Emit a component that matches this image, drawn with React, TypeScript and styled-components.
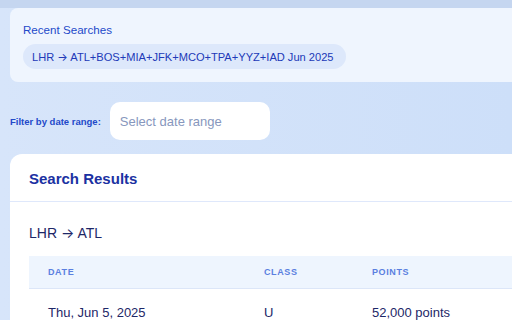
import React from "react";
import styled, { createGlobalStyle } from "styled-components";

const GlobalStyle = createGlobalStyle`
  html, body {
    margin: 0;
    padding: 0;
    overflow: hidden;
  }
  body {
    font-family: "Liberation Sans", Arial, sans-serif;
    background: linear-gradient(90deg, #d7e5fa 0%, #cddff9 100%);
  }
`;

interface ResultRow {
  date: string;
  cabin: string;
  points: string;
}

const rows: ResultRow[] = [
  { date: "Thu, Jun 5, 2025", cabin: "U", points: "52,000 points" },
];

const App: React.FC = () => {
  return (
    <>
      <GlobalStyle />
      <Page>
        <TopBand />
        <Content>
          <RecentCard>
            <RecentTitle>Recent Searches</RecentTitle>
            <ChipRow>
              <Chip>
                LHR <Arrow>→</Arrow> ATL+BOS+MIA+JFK+MCO+TPA+YYZ+IAD Jun 2025
              </Chip>
            </ChipRow>
          </RecentCard>

          <FilterRow>
            <FilterLabel>Filter by date range:</FilterLabel>
            <DateInput placeholder="Select date range" readOnly />
          </FilterRow>

          <ResultsCard>
            <ResultsHeader>Search Results</ResultsHeader>
            <ResultsBody>
              <RouteTitle>
                LHR <Arrow>→</Arrow> ATL
              </RouteTitle>
              <Table>
                <HeadRow>
                  <HeadCell>Date</HeadCell>
                  <HeadCell>Class</HeadCell>
                  <HeadCell>Points</HeadCell>
                </HeadRow>
                {rows.map((row, i) => (
                  <BodyRow key={i}>
                    <Cell>{row.date}</Cell>
                    <Cell>{row.cabin}</Cell>
                    <Cell>{row.points}</Cell>
                  </BodyRow>
                ))}
              </Table>
            </ResultsBody>
          </ResultsCard>
        </Content>
      </Page>
    </>
  );
};

export default App;

const Page = styled.div`
  width: 640px;
  height: 320px;
  overflow: hidden;
  background: linear-gradient(#c5d6f0 0, #c5d6f0 8px, transparent 8px);
`;

const TopBand = styled.div`
  height: 8px;
`;

const Content = styled.div`
  padding: 0 0 0 10px;
  display: flex;
  flex-direction: column;
`;

const Arrow = styled.span`
  font-family: "Inter", "DejaVu Sans", sans-serif;
`;

const RecentCard = styled.div`
  background: #eff5fe;
  border-radius: 8px;
  padding: 14px 13px 13px;
  display: flex;
  flex-direction: column;
  gap: 6px;
`;

const RecentTitle = styled.div`
  font-size: 11.6px;
  line-height: 16px;
  color: #2349c9;
`;

const ChipRow = styled.div`
  display: flex;
`;

const Chip = styled.div`
  background: #dde8fb;
  border-radius: 13px;
  padding: 0 12px 0 9px;
  height: 25px;
  display: flex;
  align-items: center;
  font-size: 11.1px;
  color: #2139b8;
  white-space: pre;
`;

const FilterRow = styled.div`
  display: flex;
  align-items: center;
  gap: 9px;
  margin-top: 20px;
`;

const FilterLabel = styled.label`
  font-size: 9.5px;
  font-weight: 700;
  color: #2349c9;
`;

const DateInput = styled.input`
  width: 160px;
  height: 38px;
  box-sizing: border-box;
  border: none;
  outline: none;
  border-radius: 10px;
  background: #ffffff;
  padding: 0 10px;
  font-family: "Liberation Sans", Arial, sans-serif;
  font-size: 13px;
  color: #1e2a6a;
  &::placeholder {
    color: #8797bd;
  }
`;

const ResultsCard = styled.div`
  margin-top: 14px;
  background: #ffffff;
  border-radius: 12px 0 0 0;
  display: flex;
  flex-direction: column;
`;

const ResultsHeader = styled.div`
  height: 48px;
  box-sizing: border-box;
  padding: 2px 19px 0;
  display: flex;
  align-items: center;
  border-bottom: 1px solid #dfe8fb;
  font-size: 15px;
  font-weight: 700;
  color: #1b31a2;
`;

const ResultsBody = styled.div`
  padding: 22px 0 0 19px;
  display: flex;
  flex-direction: column;
`;

const RouteTitle = styled.div`
  font-size: 14px;
  line-height: 18px;
  color: #1d2767;
  white-space: pre;
`;

const Table = styled.div`
  margin-top: 14px;
  display: flex;
  flex-direction: column;
`;

const HeadRow = styled.div`
  display: grid;
  grid-template-columns: 235px 108px 1fr;
  height: 32px;
  align-items: center;
  background: #eef5fe;
  border-bottom: 1px solid #dce6f8;
`;

const HeadCell = styled.div`
  padding-left: 19px;
  font-size: 9px;
  font-weight: 700;
  letter-spacing: 0.6px;
  text-transform: uppercase;
  color: #5a7fe0;
  &:not(:first-child) {
    padding-left: 0;
  }
`;

const BodyRow = styled.div`
  display: grid;
  grid-template-columns: 235px 108px 1fr;
  height: 47px;
  align-items: center;
`;

const Cell = styled.div`
  padding-left: 19px;
  font-size: 13px;
  color: #1d2767;
  &:not(:first-child) {
    padding-left: 0;
  }
`;
